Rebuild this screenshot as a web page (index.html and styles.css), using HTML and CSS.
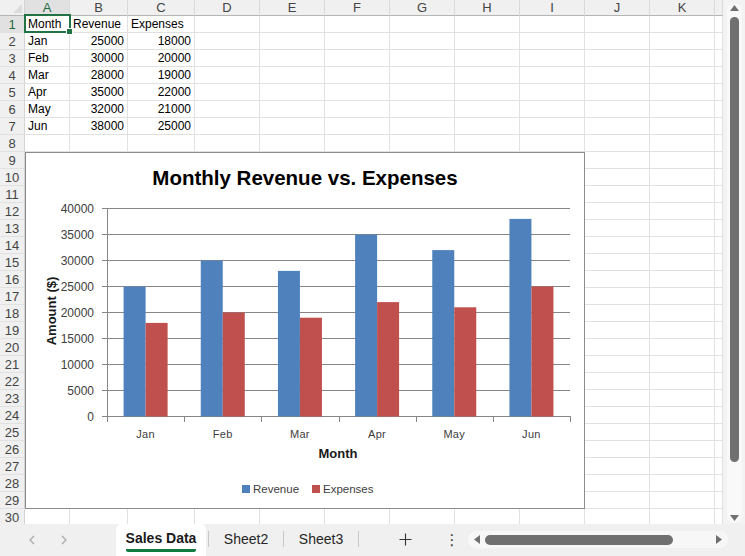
FILE: index.html
```html
<!DOCTYPE html>
<html lang="en">
<head>
    <meta charset="UTF-8">
    <meta name="viewport" content="width=device-width, initial-scale=1.0">
    <title>Sales Data</title>
    <link rel="stylesheet" href="styles.css">
</head>
<body>
    <div class="app">
        <div class="sheet">
            <div class="grid" id="grid">
                <!-- Floating chart over the cells -->
                <div class="chart">
                    <svg id="chartSvg" width="558" height="355" viewBox="0 0 558 355"></svg>
                </div>
            </div>

            <div class="vscroll">
                <div class="vtrack">
                    <svg class="arrow-up" width="9" height="6" viewBox="0 0 9 6"><polygon points="4.5,0 9,6 0,6"/></svg>
                    <div class="vthumb"></div>
                    <svg class="arrow-down" width="9" height="6" viewBox="0 0 9 6"><polygon points="0,0 9,0 4.5,6"/></svg>
                </div>
            </div>
        </div>

        <div class="tabbar">
            <div class="tab-nav">
                <span class="nav-btn"><svg width="6" height="10" viewBox="0 0 6 10"><polyline points="5,1 1,5 5,9"/></svg></span>
                <span class="nav-btn"><svg width="6" height="10" viewBox="0 0 6 10"><polyline points="1,1 5,5 1,9"/></svg></span>
            </div>
            <div class="tab active"><span class="tab-label">Sales Data</span></div>
            <div class="tab-sep"></div>
            <div class="tab">Sheet2</div>
            <div class="tab-sep"></div>
            <div class="tab">Sheet3</div>
            <div class="tab-sep"></div>
            <div class="tab-add">
                <svg width="13" height="13" viewBox="0 0 13 13"><path d="M6.5 0.5v12M0.5 6.5h12"/></svg>
            </div>
            <div class="tab-more">⋮</div>
            <div class="hscroll">
                <svg width="6" height="9" viewBox="0 0 6 9"><polygon points="0,4.5 6,0 6,9"/></svg>
                <div class="hthumb"></div>
                <svg width="6" height="9" viewBox="0 0 6 9"><polygon points="0,0 6,4.5 0,9"/></svg>
            </div>
        </div>
    </div>

    <script>
        const cols = ["A", "B", "C", "D", "E", "F", "G", "H", "I", "J", "K", ""];
        const rows = [
            ["Month", "Revenue", "Expenses"],
            ["Jan", 25000, 18000],
            ["Feb", 30000, 20000],
            ["Mar", 28000, 19000],
            ["Apr", 35000, 22000],
            ["May", 32000, 21000],
            ["Jun", 38000, 25000]
        ];

        function buildGrid() {
            const grid = document.getElementById("grid");
            let html = '<div class="corner"></div>';
            cols.forEach((c, i) => {
                html += `<div class="col-head${i === 0 ? " current" : ""}">${c}</div>`;
            });
            for (let r = 1; r <= 30; r++) {
                html += `<div class="row-head${r === 1 ? " current" : ""}">${r}</div>`;
                cols.forEach((c, i) => {
                    const v = rows[r - 1] ? rows[r - 1][i] : undefined;
                    let cls = "cell";
                    if (typeof v === "number") cls += " num";
                    if (r === 1 && i === 0) cls += " selected";
                    html += `<div class="${cls}">${v === undefined ? "" : v}</div>`;
                });
            }
            grid.insertAdjacentHTML("beforeend", html);
        }

        function buildChart() {
            const svg = document.getElementById("chartSvg");
            const left = 81, right = 544, top = 55, base = 263;
            const step = (right - left) / 6;
            const scale = (base - top) / 40000;
            let s = "";

            s += `<text class="c-title" x="279" y="32" text-anchor="middle">Monthly Revenue vs. Expenses</text>`;

            for (let k = 0; k <= 8; k++) {
                const y = base - k * 26 + 0.5;
                s += `<line class="c-grid" x1="${left - 5}" y1="${y}" x2="${right}" y2="${y}"/>`;
                s += `<text class="c-tick" x="68" y="${y + 4}" text-anchor="end">${k * 5000}</text>`;
            }

            rows.slice(1).forEach((row, i) => {
                const x = left + i * step;
                const rh = row[1] * scale, eh = row[2] * scale;
                s += `<rect fill="#4f81bd" x="${x + 16.6}" y="${base - rh + 0.5}" width="22" height="${rh}"/>`;
                s += `<rect fill="#c0504d" x="${x + 38.6}" y="${base - eh + 0.5}" width="22" height="${eh}"/>`;
                s += `<text class="c-cat" x="${x + step / 2}" y="285" text-anchor="middle">${row[0]}</text>`;
            });

            for (let i = 0; i <= 6; i++) {
                const x = Math.round(left + i * step) + 0.5;
                s += `<line class="c-grid" x1="${x}" y1="${base}" x2="${x}" y2="${base + 6}"/>`;
            }
            s += `<line class="c-grid" x1="${left + 0.5}" y1="${top}" x2="${left + 0.5}" y2="${base + 1}"/>`;

            s += `<text class="c-axis" x="312" y="305" text-anchor="middle">Month</text>`;
            s += `<text class="c-axis" transform="translate(30 158) rotate(-90)" text-anchor="middle">Amount ($)</text>`;

            s += `<rect fill="#4f81bd" x="216" y="332" width="8" height="8"/>`;
            s += `<text class="c-legend" x="227" y="340">Revenue</text>`;
            s += `<rect fill="#c0504d" x="286" y="332" width="8" height="8"/>`;
            s += `<text class="c-legend" x="297" y="340">Expenses</text>`;

            svg.innerHTML = s;
        }

        buildGrid();
        buildChart();
    </script>
</body>
</html>
```

FILE: styles.css
```css
body {
    margin: 0;
    font-family: "Liberation Sans", Arial, sans-serif;
    background: #fff;
}
.app {
    width: 745px;
    height: 556px;
    display: flex;
    flex-direction: column;
    overflow: hidden;
}
.sheet {
    display: flex;
    height: 524px;
}

/* cell grid */
.grid {
    position: relative;
    width: 723px;
    height: 524px;
    overflow: hidden;
    display: grid;
    grid-template-columns: 25px 45px 58px 67px repeat(8, 65px) 8px;
    grid-template-rows: 16px;
    grid-auto-rows: 17px;
}
.corner, .col-head, .row-head {
    background: #f0f0f0;
    color: #444;
    font-size: 13px;
    box-sizing: border-box;
}
.corner {
    position: relative;
    border-right: 1px solid #d4d4d4;
    border-bottom: 1px solid #b5b5b5;
}
.corner::after {
    content: "";
    position: absolute;
    right: 2px;
    bottom: 2px;
    border-left: 9px solid transparent;
    border-bottom: 9px solid #dcdcdc;
}
.col-head {
    text-align: center;
    line-height: 16px;
    border-right: 1px solid #dadada;
    border-bottom: 1px solid #b5b5b5;
}
.row-head {
    text-align: center;
    line-height: 17px;
    border-right: 1px solid #d4d4d4;
    border-bottom: 1px solid #e1e1e1;
}
.col-head.current, .row-head.current {
    background: #e1e1e1;
    color: #1e6b41;
}
.cell {
    box-sizing: border-box;
    border-right: 1px solid #e1e1e1;
    border-bottom: 1px solid #e1e1e1;
    font-size: 12px;
    line-height: 17px;
    padding: 0 3px;
    white-space: nowrap;
    color: #000;
}
.cell.num {
    text-align: right;
}
.cell.selected {
    position: relative;
    z-index: 2;
}
.cell.selected::after {
    content: "";
    position: absolute;
    left: -1px;
    top: -2px;
    right: -2px;
    bottom: -1px;
    border: 2px solid #217346;
}
.cell.selected::before {
    content: "";
    position: absolute;
    right: -4px;
    bottom: -3px;
    width: 5px;
    height: 5px;
    background: #217346;
    border: 1px solid #fff;
    z-index: 1;
}

/* embedded chart */
.chart {
    position: absolute;
    left: 25px;
    top: 152px;
    width: 560px;
    height: 357px;
    box-sizing: border-box;
    border: 1px solid #8c8c8c;
    background: #fff;
    z-index: 3;
}
.chart svg {
    display: block;
}
.c-title {
    font-size: 20.5px;
    font-weight: bold;
    fill: #000;
}
.c-grid {
    stroke: #868686;
    stroke-width: 1;
}
.c-tick {
    font-size: 12px;
    fill: #404040;
}
.c-cat {
    font-size: 11px;
    fill: #404040;
    letter-spacing: 0.3px;
}
.c-axis {
    font-size: 13px;
    font-weight: bold;
    fill: #1a1a1a;
}
.c-legend {
    font-size: 11.5px;
    fill: #404040;
}

/* vertical scrollbar */
.vscroll {
    width: 22px;
    background: #f3f3f3;
    padding: 3px 3px 1px 4px;
    box-sizing: border-box;
}
.vtrack {
    height: 100%;
    background: #f9f9f9;
    border-radius: 8px;
    display: flex;
    flex-direction: column;
    align-items: center;
    padding-top: 2px;
    box-sizing: border-box;
}
.vtrack svg {
    fill: #707070;
}
.vthumb {
    width: 9px;
    height: 445px;
    margin: 6px 0 53px;
    background: #707070;
    border-radius: 5px;
}

/* sheet tabs */
.tabbar {
    height: 32px;
    display: flex;
    align-items: stretch;
    background: #f0f0f0;
    font-size: 14px;
    color: #262626;
}
.tab-nav {
    width: 116px;
    padding-left: 16px;
    box-sizing: border-box;
    display: flex;
}
.nav-btn {
    width: 32px;
    display: flex;
    align-items: center;
    justify-content: center;
    padding-bottom: 1px;
}
.nav-btn svg {
    fill: none;
    stroke: #a8a8a8;
    stroke-width: 1.2;
}
.tab {
    width: 72px;
    display: flex;
    align-items: center;
    justify-content: center;
    padding-bottom: 2px;
    box-sizing: border-box;
}
.tab.active {
    width: 90px;
    background: #fff;
    border-radius: 5px 5px 0 0;
    font-weight: bold;
    color: #1a1a1a;
    padding-bottom: 0;
}
.tab-label {
    padding-bottom: 3px;
    border-bottom: 3px solid #107c41;
    border-radius: 2px;
    margin-top: 1px;
}
.tab-sep {
    width: 1px;
    margin: 7px 1px 9px;
    background: #c8c8c8;
}
.tab.active + .tab-sep {
    margin-left: 2px;
}
.tab-add {
    width: 46px;
    margin-left: 22px;
    display: flex;
    align-items: center;
    justify-content: center;
    padding-bottom: 1px;
}
.tab-add svg {
    stroke: #333;
    stroke-width: 1.1;
}
.tab-more {
    width: 32px;
    margin-left: 8px;
    display: flex;
    align-items: center;
    justify-content: center;
    padding-bottom: 0;
    font-size: 15px;
    font-family: "DejaVu Sans", sans-serif;
    color: #333;
}
.hscroll {
    width: 260px;
    height: 17px;
    margin-top: 7px;
    background: #f7f7f7;
    border-radius: 9px;
    display: flex;
    align-items: center;
    padding: 0 6px;
    box-sizing: border-box;
}
.hscroll svg {
    fill: #707070;
}
.hthumb {
    width: 188px;
    height: 10px;
    margin: 0 43px 0 5px;
    background: #707070;
    border-radius: 5px;
}
```
